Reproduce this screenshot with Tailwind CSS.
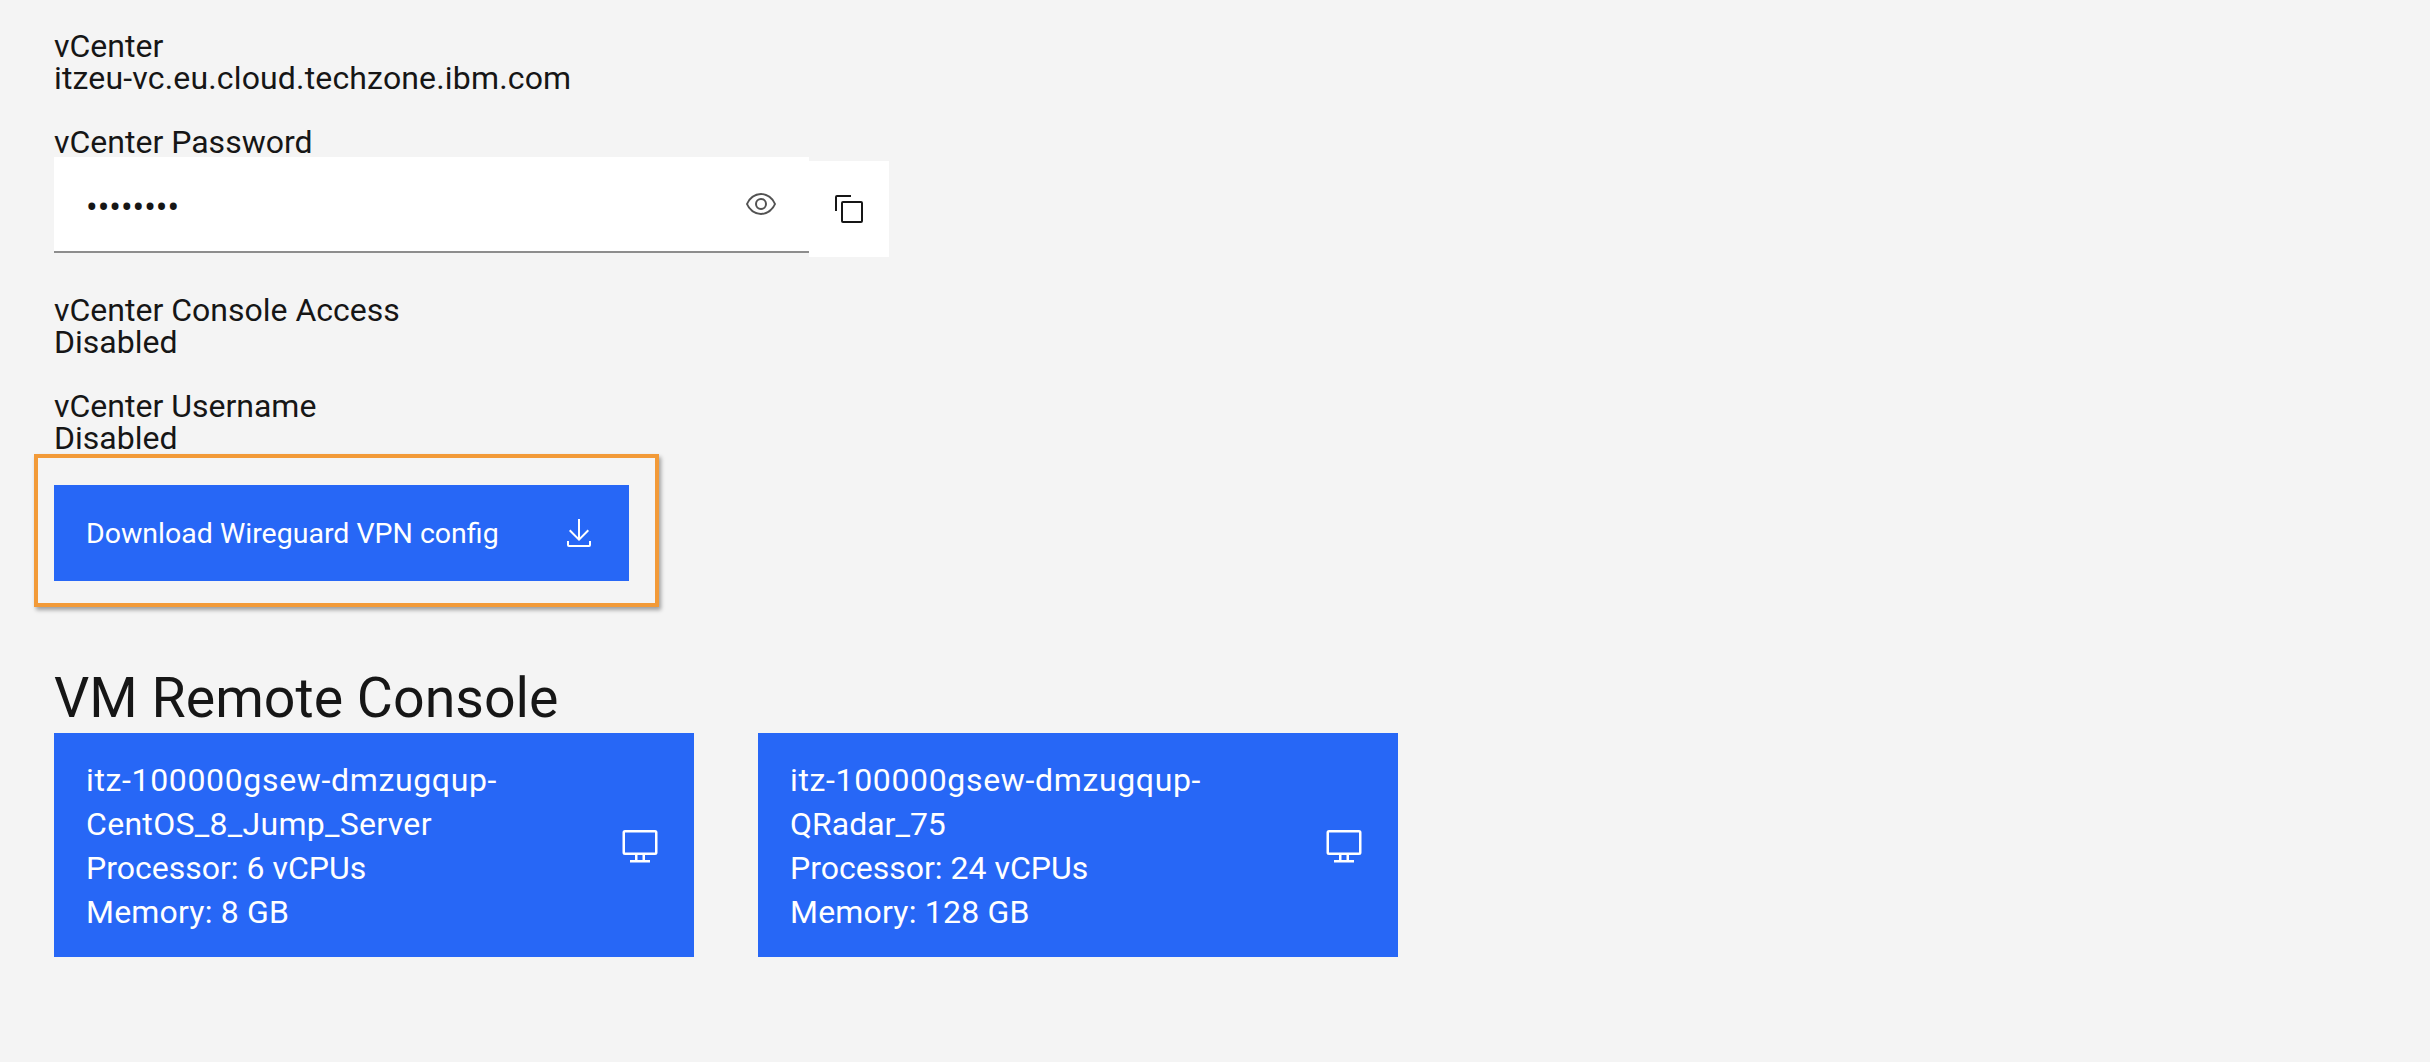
<!DOCTYPE html>
<html lang="en">
<head>
  <meta charset="UTF-8" />
  <title>Reservation details</title>
  <script src="https://cdn.jsdelivr.net/npm/@tailwindcss/browser@4"></script>
</head>
<body class="min-h-screen bg-[#f4f4f4] text-[#161616] font-['Roboto',sans-serif] text-[32px] leading-[32px] font-normal">
  <main class="pl-[54px] pt-[30px]">

    <section>
      <p>vCenter</p>
      <p class="tracking-[0.16px]">itzeu-vc.eu.cloud.techzone.ibm.com</p>
    </section>

    <section class="mt-[32px]">
      <p class="-mb-px">vCenter Password</p>
      <div class="flex items-start">
        <div class="flex h-[96px] w-[755px] items-center justify-between border-b-2 border-[#8d8d8d] bg-white pl-[32px] pr-[32px]">
          <input type="password" value="password" readonly class="w-[400px] translate-y-[3px] bg-transparent text-[34.5px] text-[#161616] outline-none" />
          <svg class="size-[32px] fill-[#525252]" viewBox="0 0 32 32">
            <path d="M30.94,15.66A16.69,16.69,0,0,0,16,5,16.69,16.69,0,0,0,1.06,15.66a1,1,0,0,0,0,.68A16.69,16.69,0,0,0,16,27,16.69,16.69,0,0,0,30.94,16.34,1,1,0,0,0,30.94,15.66ZM16,25c-5.3,0-10.9-3.93-12.93-9C5.1,10.93,10.7,7,16,7s10.9,3.93,12.93,9C26.9,21.07,21.3,25,16,25Z"/>
            <path d="M16,10a6,6,0,1,0,6,6A6,6,0,0,0,16,10Zm0,10a4,4,0,1,1,4-4A4,4,0,0,1,16,20Z"/>
          </svg>
        </div>
        <button class="mt-[4px] flex h-[96px] w-[80px] items-center justify-center bg-white">
          <svg class="size-[32px] fill-[#161616]" viewBox="0 0 32 32">
            <path d="M28,10V28H10V10H28m0-2H10a2,2,0,0,0-2,2V28a2,2,0,0,0,2,2H28a2,2,0,0,0,2-2V10a2,2,0,0,0-2-2Z"/>
            <path d="M4,18H2V4A2,2,0,0,1,4,2H18V4H4Z"/>
          </svg>
        </button>
      </div>
    </section>

    <section class="mt-[37px]">
      <p>vCenter Console Access</p>
      <p>Disabled</p>
    </section>

    <section class="mt-[32px]">
      <p>vCenter Username</p>
      <p>Disabled</p>
    </section>

    <!-- orange callout sits over the button -->
    <div class="relative mt-[31px] w-[575px]">
      <button class="flex h-[96px] w-full items-center justify-between bg-[#2767f6] pl-[32px] pr-[34px] text-left text-[28.5px] text-white">
        <span class="translate-y-[1px]">Download Wireguard VPN config</span>
        <svg class="size-[32px] fill-white" viewBox="0 0 32 32">
          <path d="M26 24v4H6v-4H4v4a2 2 0 0 0 2 2h20a2 2 0 0 0 2-2v-4zM26 14l-1.41-1.41L17 20.17V2h-2v18.17l-7.59-7.58L6 14l10 10 10-10z"/>
        </svg>
      </button>
      <div class="absolute -top-[31px] -left-[20px] h-[153px] w-[625px] border-[4px] border-[#f29a38] shadow-[2px_3px_4px_rgba(0,0,0,0.35)]"></div>
    </div>

    <h2 class="mt-[86px] mb-[2px] text-[55.5px] leading-[64px]">VM Remote Console</h2>

    <div class="flex gap-[64px]">
      <a class="flex h-[224px] w-[640px] items-center justify-between bg-[#2767f6] pl-[32px] pr-[34px] leading-[44px] text-white">
        <div class="w-[500px] translate-y-[1px]">
          <p><span class="tracking-[0.65px]">itz-100000gsew-dmzugqup-</span><br><span class="tracking-[0.3px]">CentOS_8_Jump_Server</span></p>
          <p>Processor: 6 vCPUs</p>
          <p class="tracking-[0.2px]">Memory: 8 GB</p>
        </div>
        <svg class="size-[40px] fill-white" viewBox="0 0 32 32">
          <path d="M28,4H4A2,2,0,0,0,2,6V22a2,2,0,0,0,2,2h8v4H8v2H24V28H20V24h8a2,2,0,0,0,2-2V6A2,2,0,0,0,28,4ZM18,28H14V24h4Zm10-6H4V6H28Z"/>
        </svg>
      </a>
      <a class="flex h-[224px] w-[640px] items-center justify-between bg-[#2767f6] pl-[32px] pr-[34px] leading-[44px] text-white">
        <div class="w-[500px] translate-y-[1px]">
          <p><span class="tracking-[0.65px]">itz-100000gsew-dmzugqup-</span><br>QRadar_75</p>
          <p>Processor: 24 vCPUs</p>
          <p class="tracking-[0.2px]">Memory: 128 GB</p>
        </div>
        <svg class="size-[40px] fill-white" viewBox="0 0 32 32">
          <path d="M28,4H4A2,2,0,0,0,2,6V22a2,2,0,0,0,2,2h8v4H8v2H24V28H20V24h8a2,2,0,0,0,2-2V6A2,2,0,0,0,28,4ZM18,28H14V24h4Zm10-6H4V6H28Z"/>
        </svg>
      </a>
    </div>

  </main>
</body>
</html>
